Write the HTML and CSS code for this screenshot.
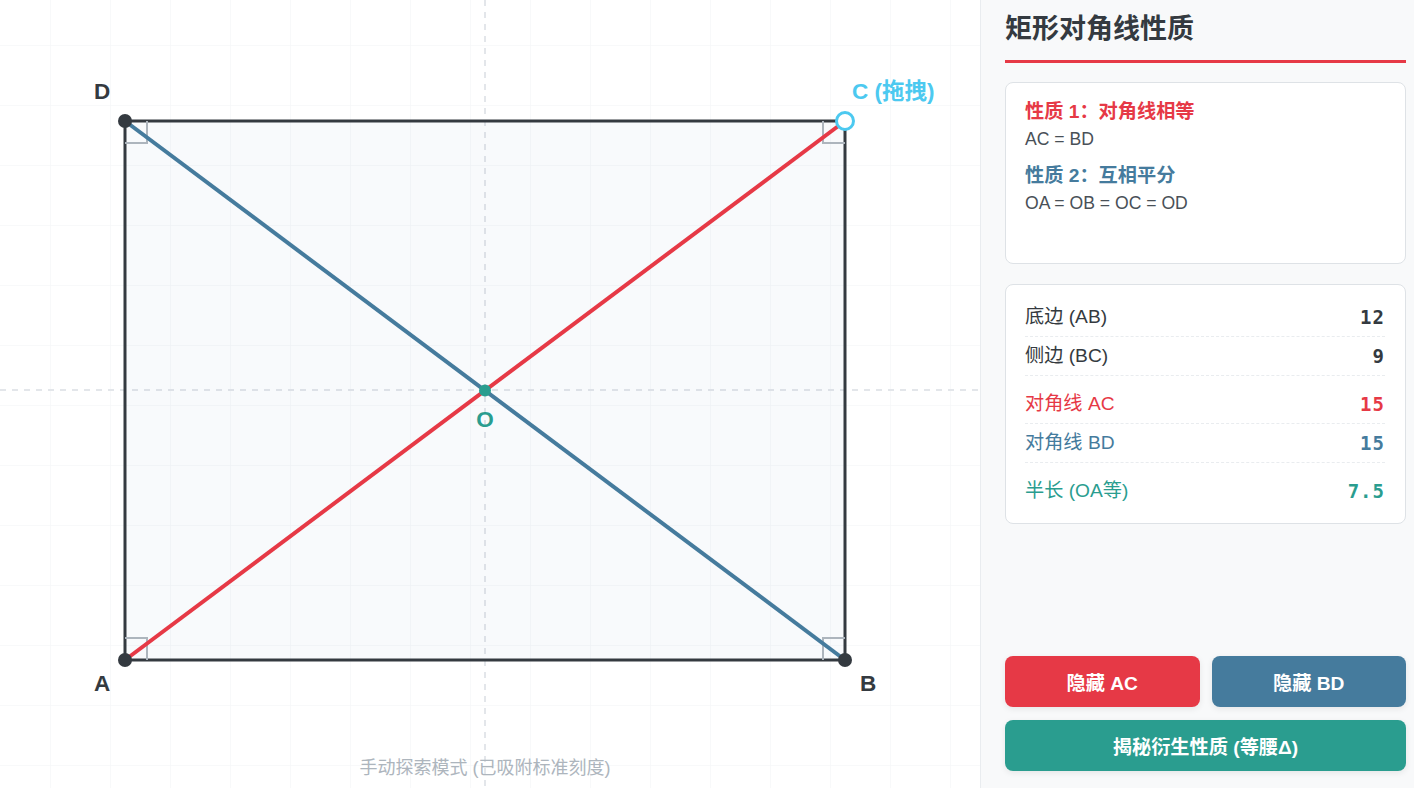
FILE: index.html
```html
<!DOCTYPE html>
<html lang="zh">
<head>
<meta charset="utf-8">
<title>矩形对角线性质</title>
<link rel="stylesheet" href="styles.css">
</head>
<body>
<div class="app">
  <main class="stage">
    <svg class="board" width="980" height="788" viewBox="0 0 980 788" xmlns="http://www.w3.org/2000/svg">
      <defs>
        <pattern id="grid" x="50" y="45" width="60" height="60" patternUnits="userSpaceOnUse">
          <path d="M60 0 L0 0 L0 60" fill="none" stroke="#f2f3f5" stroke-width="1"/>
        </pattern>
      </defs>
      <rect x="0" y="0" width="980" height="788" fill="url(#grid)"/>
      <line x1="485" y1="0" x2="485" y2="788" stroke="#e3e6ea" stroke-width="2" stroke-dasharray="6 6"/>
      <line x1="0" y1="390" x2="980" y2="390" stroke="#e3e6ea" stroke-width="2" stroke-dasharray="6 6"/>
      <rect x="125" y="121" width="720" height="539" fill="rgba(69,123,157,0.035)" stroke="#343a40" stroke-width="3"/>
      <g fill="none" stroke="#adb5bd" stroke-width="2">
        <polyline points="125,638 147,638 147,660"/>
        <polyline points="823,660 823,638 845,638"/>
        <polyline points="823,121 823,143 845,143"/>
        <polyline points="147,121 147,143 125,143"/>
      </g>
      <line x1="125" y1="660" x2="845" y2="121" stroke="#e63946" stroke-width="4"/>
      <line x1="845" y1="660" x2="125" y2="121" stroke="#457b9d" stroke-width="4"/>
      <circle cx="125" cy="660" r="7" fill="#343a40"/>
      <circle cx="845" cy="660" r="7" fill="#343a40"/>
      <circle cx="125" cy="121" r="7" fill="#343a40"/>
      <circle cx="485" cy="390.5" r="6" fill="#2a9d8f"/>
      <circle cx="845" cy="121" r="8.5" fill="#ffffff" stroke="#4cc9f0" stroke-width="3"/>
      <text class="pt" x="102" y="99" text-anchor="middle">D</text>
      <text class="pt" x="102" y="691" text-anchor="middle">A</text>
      <text class="pt" x="868" y="691" text-anchor="middle">B</text>
      <text class="pt pt-o" x="485" y="427" text-anchor="middle">O</text>
      <text class="pt pt-c" x="852" y="99">C (拖拽)</text>
      <text class="hint" x="485" y="773.5" text-anchor="middle">手动探索模式 (已吸附标准刻度)</text>
    </svg>
  </main>
  <aside class="panel">
    <h2 class="title">矩形对角线性质</h2>
    <section class="card props">
      <div class="prop-head c-red">性质 1：对角线相等</div>
      <div class="prop-body">AC = BD</div>
      <div class="prop-head c-blue second">性质 2：互相平分</div>
      <div class="prop-body">OA = OB = OC = OD</div>
    </section>
    <section class="card stats">
      <div class="row"><span>底边 (AB)</span><b class="val">12</b></div>
      <div class="row"><span>侧边 (BC)</span><b class="val">9</b></div>
      <div class="row row-red spaced"><span>对角线 AC</span><b class="val">15</b></div>
      <div class="row row-blue"><span>对角线 BD</span><b class="val">15</b></div>
      <div class="row row-green spaced last"><span>半长 (OA等)</span><b class="val">7.5</b></div>
    </section>
    <div class="actions">
      <div class="btn-row">
        <button class="btn btn-red">隐藏 AC</button>
        <button class="btn btn-blue">隐藏 BD</button>
      </div>
      <button class="btn btn-green">揭秘衍生性质 (等腰Δ)</button>
    </div>
  </aside>
</div>
</body>
</html>
```

FILE: styles.css
```css
* { box-sizing: border-box; }
html, body { margin: 0; padding: 0; }
body {
  font-family: "Liberation Sans", "Noto Sans CJK SC", sans-serif;
  background: #ffffff;
  color: #343a40;
}
.app {
  display: flex;
  width: 1414px;
  height: 788px;
  overflow: hidden;
}
.stage {
  flex: 0 0 980px;
  height: 788px;
  background: #ffffff;
}
.board { display: block; }
.pt {
  font-family: "Liberation Sans", "Noto Sans CJK SC", sans-serif;
  font-weight: 700;
  font-size: 22.5px;
  fill: #343a40;
}
.pt-o { fill: #2a9d8f; }
.pt-c { fill: #4cc9f0; }
.hint {
  font-family: "Liberation Sans", "Noto Sans CJK SC", sans-serif;
  font-size: 18px;
  fill: #adb5bd;
}
.panel {
  flex: 1;
  display: flex;
  flex-direction: column;
  background: #f8f9fa;
  border-left: 1px solid #e9ecef;
  padding: 12px 8px 17px 24px;
}
.title {
  margin: 0 0 19px;
  font-size: 27px;
  line-height: 35px;
  font-weight: 700;
  color: #343a40;
  padding-bottom: 13px;
  border-bottom: 3px solid #e63946;
}
.card {
  background: #ffffff;
  border: 1px solid #dee2e6;
  border-radius: 8px;
}
.props {
  height: 182px;
  padding: 14px 19px;
}
.prop-head {
  font-size: 19.2px;
  line-height: 29px;
  font-weight: 700;
}
.prop-head.second { margin-top: 9px; }
.prop-body {
  font-size: 17.6px;
  line-height: 26px;
  color: #495057;
}
.c-red { color: #e63946; }
.c-blue { color: #457b9d; }
.stats {
  margin-top: 20px;
  padding: 13px 20px 13px 19px;
}
.row {
  display: flex;
  justify-content: space-between;
  align-items: center;
  font-size: 19.2px;
  line-height: 28px;
  padding: 5px 0;
  border-bottom: 1px dashed #e9ecef;
  color: #343a40;
}
.row.row-red { color: #e63946; }
.row.row-blue { color: #457b9d; }
.row.row-green { color: #2a9d8f; }
.row.spaced { margin-top: 9px; }
.row.last { border-bottom: none; }
.val {
  font-family: "DejaVu Sans Mono", "Liberation Mono", monospace;
  font-weight: 700;
  font-size: 19px;
  letter-spacing: 1px;
}
.actions {
  margin-top: auto;
  display: flex;
  flex-direction: column;
  gap: 13px;
}
.btn-row {
  display: flex;
  gap: 12px;
}
.btn {
  height: 51px;
  border: none;
  border-radius: 8px;
  color: #ffffff;
  font-family: "Liberation Sans", "Noto Sans CJK SC", sans-serif;
  font-size: 19.2px;
  font-weight: 700;
  box-shadow: 0 2px 6px rgba(0, 0, 0, 0.08);
  cursor: pointer;
}
.btn-row .btn { flex: 1 1 0; }
.btn-red { background: #e63946; }
.btn-blue { background: #457b9d; }
.btn-green { background: #2a9d8f; width: 100%; flex: none; }
```
